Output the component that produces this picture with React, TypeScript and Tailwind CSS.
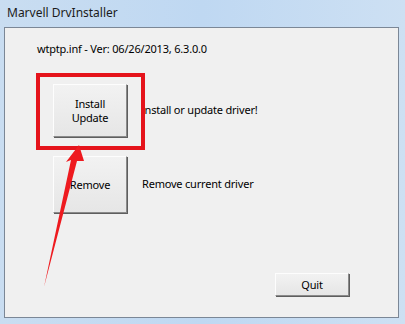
const font = { fontFamily: '"Noto Sans", "DejaVu Sans", sans-serif' };

function WinButton({ children, className = "" }: { children: React.ReactNode; className?: string }) {
  return (
    <div
      className={`flex flex-col items-center justify-center bg-gradient-to-b from-[#f2f2f2] to-[#e6e6e6] border border-t-[#fdfdfd] border-l-[#fdfdfd] border-r-[#8a8a8a] border-b-[#8a8a8a] shadow-[1px_1px_0_#5e5e5e] text-[11px] leading-[14px] tracking-[-0.2px] text-black ${className}`}
    >
      {children}
    </div>
  );
}

export default function App() {
  return (
    <div className="relative w-[405px] h-[324px] overflow-hidden bg-gradient-to-r from-[#c9ddf1] via-[#bfd8f2] to-[#cde0f3]" style={font}>
      {/* title bar */}
      <div className="h-[27px] pl-[7px] pt-[5px] text-[12px] leading-[16px] text-[#1b1b1b]">
        Marvell DrvInstaller
      </div>

      {/* client area */}
      <div className="ml-[4px] w-[395px] h-[291px] bg-[#f0f0f0] border border-[#7b8796] flex flex-col text-[11px] tracking-[-0.2px] text-black">
        <div className="pl-[32px] pt-[14px] leading-[14px]">
          wtptp.inf - Ver: 06/26/2013, 6.3.0.0
        </div>

        <div className="flex items-center mt-[28px] ml-[48px]">
          <WinButton className="w-[74px] h-[53px]">
            <span>Install</span>
            <span>Update</span>
          </WinButton>
          <span className="ml-[14px]">Install or update driver!</span>
        </div>

        <div className="flex items-center mt-[19px] ml-[48px]">
          <WinButton className="w-[74px] h-[57px]">
            <span>Remove</span>
          </WinButton>
          <span className="ml-[15px]">Remove current driver</span>
        </div>

        <div className="flex justify-end mt-[60px] mr-[49px]">
          <WinButton className="w-[74px] h-[23px]">
            <span>Quit</span>
          </WinButton>
        </div>
      </div>

      {/* annotation: red box */}
      <div className="absolute left-[36px] top-[73px] w-[109px] h-[77px] border-[4px] border-[#e5131b]" />

      {/* annotation: red arrow */}
      <svg className="absolute left-0 top-0" width="405" height="324" viewBox="0 0 405 324">
        <path d="M79 145 L84 161 L77 161 L44 287 L71 160 L66 162 Z" fill="#ee1a1f" />
      </svg>
    </div>
  );
}
